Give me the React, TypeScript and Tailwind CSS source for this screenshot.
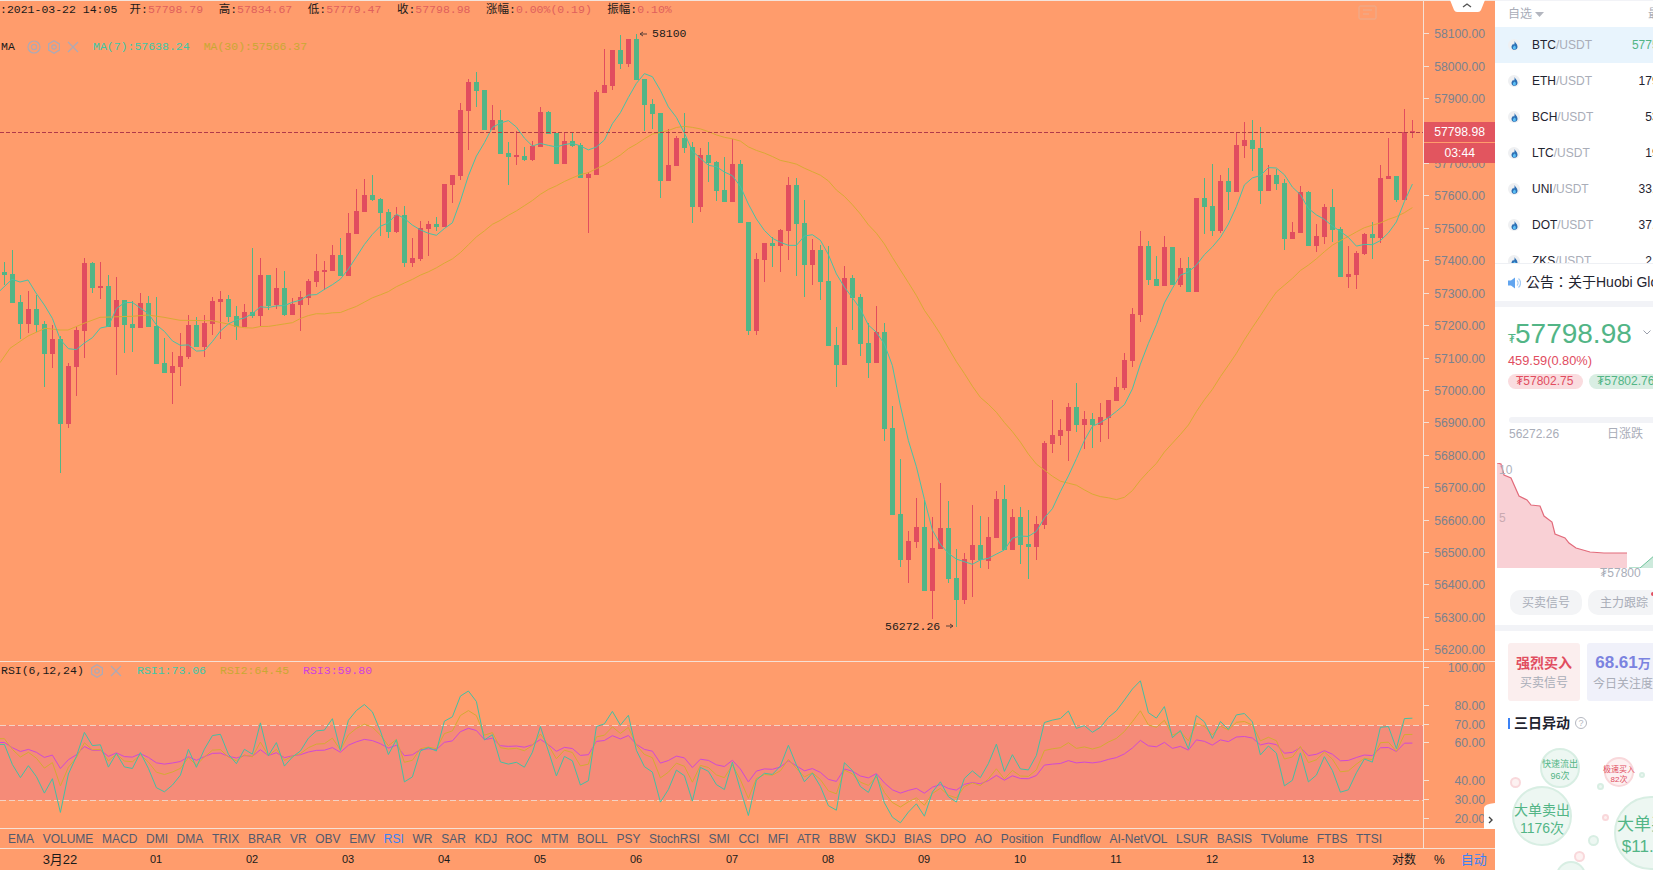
import React from "react";

const SANS = "[font-family:'Liberation_Sans','Noto_Sans_CJK_SC',sans-serif]";
const MONO = "[font-family:'Liberation_Mono','Noto_Sans_CJK_SC',monospace]";

// [red?, high, bodyTop, bodyBottom, low] read off the picture, y = y0 + v / 3
type Row = number[];
const seg = (y0: number, rows: Row[]) =>
  rows.map(([red, h, t, b, l]) => ({
    red: red === 1,
    high: y0 + h / 3,
    top: y0 + t / 3,
    bottom: y0 + b / 3,
    low: y0 + l / 3,
  }));

const candles = [
  ...seg(230, [
    [0, 96, 125, 135, 165], [0, 60, 132, 218, 218], [0, 195, 216, 282, 326], [1, 182, 237, 282, 310],
    [0, 195, 237, 285, 305], [0, 273, 282, 372, 472], [1, 285, 327, 372, 415], [0, 318, 327, 582, 728],
    [1, 400, 408, 582, 594], [1, 292, 300, 411, 498], [1, 84, 99, 303, 385], [0, 96, 99, 174, 189],
    [1, 96, 168, 174, 208], [0, 136, 168, 291, 291], [1, 142, 210, 291, 435], [0, 210, 210, 285, 368],
    [0, 212, 282, 294, 366], [1, 190, 219, 294, 294], [0, 198, 219, 291, 291], [0, 200, 288, 402, 402],
    [0, 324, 399, 429, 429], [1, 366, 408, 429, 522], [1, 309, 378, 411, 468], [1, 255, 285, 382, 387],
    [0, 262, 285, 351, 351], [1, 255, 279, 351, 382], [1, 201, 213, 282, 315], [1, 182, 207, 216, 328],
    [0, 196, 207, 262, 276], [0, 228, 258, 291, 330], [1, 222, 246, 291, 291], [0, 54, 246, 258, 264],
    [1, 84, 135, 258, 288], [0, 135, 135, 228, 240], [1, 114, 174, 226, 238], [0, 122, 174, 255, 258],
    [1, 204, 222, 255, 255], [1, 182, 201, 225, 302], [1, 147, 153, 204, 225], [1, 72, 123, 156, 171],
    [1, 93, 120, 126, 180], [1, 45, 75, 123, 123],
  ]),
  ...seg(30, [
    [0, 625, 675, 738, 738], [1, 550, 610, 738, 738], [1, 477, 543, 612, 612], [1, 448, 495, 546, 546],
    [0, 435, 495, 510, 513], [0, 505, 507, 549, 618], [0, 537, 546, 606, 624], [1, 531, 555, 606, 609],
    [0, 528, 555, 699, 710], [1, 625, 684, 699, 710], [1, 572, 595, 687, 693], [1, 572, 582, 597, 678],
    [0, 561, 582, 591, 603], [1, 462, 462, 591, 591], [1, 435, 435, 465, 519], [1, 219, 240, 438, 450],
    [1, 147, 156, 243, 360], [0, 126, 156, 183, 230], [0, 180, 180, 300, 300], [1, 224, 270, 300, 300],
    [0, 240, 270, 372, 372], [0, 335, 369, 381, 465], [1, 303, 375, 381, 405], [0, 352, 378, 390, 393],
    [1, 333, 348, 390, 393], [1, 231, 246, 351, 351], [0, 243, 246, 312, 312], [0, 309, 309, 402, 402],
    [1, 306, 333, 402, 402], [0, 308, 333, 348, 352], [0, 338, 345, 444, 444], [1, 426, 432, 444, 608],
    [1, 180, 186, 435, 435], [1, 57, 165, 189, 189], [1, 60, 60, 168, 180], [0, 16, 60, 102, 118],
    [1, 27, 27, 102, 110], [0, 12, 27, 150, 150], [0, 147, 147, 225, 303], [0, 208, 222, 252, 297],
    [0, 249, 249, 453, 504], [1, 297, 405, 453, 453], [1, 318, 324, 408, 408], [0, 249, 324, 354, 369],
    [0, 335, 351, 531, 580], [1, 355, 375, 531, 546], [0, 335, 375, 399, 456], [0, 392, 396, 483, 513],
    [0, 381, 480, 516, 516], [1, 326, 402, 516, 516], [0, 390, 402, 579, 579],
  ]),
  ...seg(180, [
    [0, 126, 126, 453, 466], [1, 219, 237, 453, 466], [1, 189, 189, 240, 306], [0, 170, 189, 198, 260],
    [1, 146, 150, 198, 276], [1, -9, 15, 153, 240], [0, -6, 15, 132, 288], [0, 61, 129, 255, 350],
    [1, 177, 210, 255, 315], [0, 195, 210, 306, 360], [0, 198, 303, 498, 498], [0, 441, 495, 555, 622],
    [1, 258, 294, 555, 555], [0, 285, 294, 354, 450], [0, 342, 351, 492, 528], [0, 430, 489, 549, 594],
    [1, 378, 456, 549, 549], [0, 430, 456, 747, 782], [0, 678, 744, 1005, 1005], [0, 837, 1002, 1140, 1162],
    [1, 1052, 1083, 1140, 1210], [1, 954, 1041, 1086, 1104], [0, 960, 1041, 1233, 1233], [1, 1010, 1104, 1233, 1317],
    [1, 909, 1044, 1107, 1107], [0, 964, 1044, 1197, 1208], [0, 1108, 1194, 1260, 1340], [1, 1120, 1137, 1260, 1272],
    [1, 976, 1095, 1140, 1252], [0, 1008, 1095, 1140, 1164], [1, 1010, 1071, 1143, 1166], [1, 934, 957, 1074, 1074],
    [0, 915, 957, 1110, 1110], [1, 988, 1011, 1110, 1110], [0, 982, 1011, 1095, 1152], [0, 990, 1092, 1101, 1196],
    [1, 1008, 1032, 1101, 1140], [1, 783, 789, 1035, 1048], [1, 660, 765, 792, 820], [1, 716, 750, 768, 795],
    [1, 670, 681, 753, 844], [0, 610, 681, 735, 756], [1, 692, 717, 735, 808], [0, 698, 717, 735, 804],
    [1, 668, 711, 735, 786], [1, 660, 660, 714, 776], [1, 590, 621, 663, 663], [1, 519, 540, 624, 630],
    [1, 385, 402, 543, 560],
  ]),
  ...seg(100, [
    [1, 393, 438, 645, 665], [0, 423, 438, 540, 555], [0, 468, 537, 558, 558], [1, 408, 441, 558, 558],
    [0, 441, 441, 555, 555], [1, 475, 504, 555, 562], [0, 470, 504, 576, 576], [1, 294, 294, 576, 576],
    [0, 235, 294, 321, 402], [0, 192, 318, 393, 408], [1, 225, 243, 393, 399], [0, 205, 243, 276, 330],
    [1, 96, 135, 276, 276], [1, 67, 120, 138, 175], [0, 60, 120, 147, 213], [0, 82, 144, 273, 312],
    [1, 195, 225, 273, 273], [0, 207, 225, 252, 270], [0, 237, 249, 417, 450], [1, 366, 396, 417, 417],
    [1, 258, 276, 399, 399], [0, 273, 276, 438, 438], [1, 372, 408, 438, 456], [1, 312, 321, 411, 432],
    [0, 267, 321, 390, 426], [0, 381, 387, 531, 531], [1, 438, 522, 531, 564], [1, 453, 459, 525, 567],
    [1, 399, 402, 462, 465], [0, 366, 402, 414, 477], [1, 195, 234, 414, 430], [1, 114, 228, 237, 237],
    [0, 228, 228, 300, 306], [1, 27, 96, 300, 300], [1, 60, 93, 99, 114],
  ]),
];

const closes = candles.map((c) => (c.red ? c.top : c.bottom));
const xOf = (i: number) => 4.4 + 8 * i;

const movingAverage = (n: number, from: number) =>
  closes.flatMap((_, i) => {
    if (i < from) return [];
    const part = closes.slice(i - n + 1, i + 1);
    return [[xOf(i), part.reduce((a, b) => a + b, 0) / part.length]];
  });

const line = (pts: number[][]) => pts.map(([x, y]) => `${x},${y.toFixed(1)}`).join(" ");

const ma7 = [[0, 290.7], [12, 279.3], [20, 282], [28, 280], [36, 293], [44.4, 305], ...movingAverage(7, 6)];
const ma30 = [
  [0, 362.7], [10, 348.3], [28, 336], [45, 328.3], [60, 330], [68, 330], [84, 323.3], [100, 317.3],
  [132, 316.3], [148, 315], [164, 317.3], [180, 320.3], [212, 320.7], [228, 324],
  ...movingAverage(30, 29),
];

const rsiY = (v: number) => 667 + (100 - v) * 1.887;

function rsiLine(n: number, seed: number) {
  let up = (seed / 100) * 25;
  let down = (1 - seed / 100) * 25;
  const pts = [[0, rsiY(seed)]];
  closes.forEach((y, i) => {
    if (i > 0) {
      const d = closes[i - 1] - y;
      up = (up * (n - 1) + Math.max(d, 0)) / n;
      down = (down * (n - 1) + Math.max(-d, 0)) / n;
    }
    pts.push([xOf(i), rsiY((100 * up) / (up + down))]);
  });
  return pts;
}

const priceLabels = Array.from({ length: 20 }, (_, i) => 58100 - i * 100);
const rsiLabels = [100, 80, 70, 60, 40, 30, 20];
const priceY = (p: number) => 33.3 + ((58100 - p) / 100) * 32.42;

function Chart() {
  return (
    <svg width="1495" height="829" className="block">
      <rect x="0" y="725" width="1423" height="75" fill="#f58b78" />
      <line x1="0" x2="1423" y1="725.5" y2="725.5" stroke="#f3d2c4" strokeDasharray="6 3" />
      <line x1="0" x2="1423" y1="800.5" y2="800.5" stroke="#f3d2c4" strokeDasharray="6 3" />

      {candles.map((c, i) => (
        <g key={i} fill={c.red ? "#e14d5f" : "#52b586"} shapeRendering="crispEdges">
          <rect x={4 + 8 * i} y={Math.round(c.high)} width="1" height={Math.max(1, Math.round(c.low) - Math.round(c.high))} />
          <rect x={2 + 8 * i} y={Math.round(c.top)} width="5" height={Math.max(2, Math.round(c.bottom) - Math.round(c.top))} />
        </g>
      ))}

      <polyline points={line(ma30)} fill="none" stroke="#d9a935" strokeWidth="1" />
      <polyline points={line(ma7)} fill="none" stroke="#45c3a8" strokeWidth="1" />
      <polyline points={line(rsiLine(24, 60))} fill="none" stroke="#cf49d4" strokeWidth="1" />
      <polyline points={line(rsiLine(12, 62))} fill="none" stroke="#d4a933" strokeWidth="1" />
      <polyline points={line(rsiLine(6, 59))} fill="none" stroke="#44bfa3" strokeWidth="1" />

      <line x1="0" x2="1429" y1="132.5" y2="132.5" stroke="#b03a4a" strokeDasharray="4 2" />

      <g shapeRendering="crispEdges" stroke="#f6e0d4">
        <line x1="1423.5" x2="1423.5" y1="0" y2="829" />
        <line x1="0" x2="1495" y1="661.5" y2="661.5" />
        <line x1="0" x2="1495" y1="828.5" y2="828.5" />
        {priceLabels.map((p) => (
          <line key={p} x1="1424" x2="1429" y1={Math.round(priceY(p)) + 0.5} y2={Math.round(priceY(p)) + 0.5} />
        ))}
        {rsiLabels.map((v) => (
          <line key={v} x1="1424" x2="1429" y1={Math.round(rsiY(v)) + 0.5} y2={Math.round(rsiY(v)) + 0.5} />
        ))}
      </g>

      <g fontFamily="Liberation Sans" fontSize="12.2" fill="#7a828f" textAnchor="end">
        {priceLabels
          .filter((p) => p !== 57800)
          .map((p) => (
            <text key={p} x="1485" y={priceY(p) + 5}>{p}.00</text>
          ))}
        {rsiLabels.map((v) => (
          <text key={v} x="1485" y={rsiY(v) + 5}>{v}.00</text>
        ))}
      </g>

      <rect x="1424" y="122" width="71" height="20" fill="#e2555f" />
      <rect x="1424" y="143" width="71" height="20" fill="#e2555f" />
      <g fontFamily="Liberation Sans" fontSize="12.2" fill="#fff" textAnchor="end">
        <text x="1485" y="136">57798.98</text>
        <text x="1475" y="157">03:44</text>
      </g>

      <g fontFamily="Liberation Mono" fontSize="11.5" fill="#1a1a1a">
        <text x="652" y="37">58100</text>
        <text x="885" y="630">56272.26</text>
      </g>
      <g fill="none" stroke="#5a4038">
        <path d="M647 34h-7l3-2m-3 2l3 2" />
        <path d="M946 626h7l-3-2m3 2l-3 2" />
      </g>

      <g fill="none" stroke="#e6b39a" opacity="0.8">
        <rect x="1359" y="6" width="17" height="13" rx="1" />
        <path d="M1363 10h9M1363 14h6" />
      </g>
      <path d="M1450 0h35l-4 10q-1 2-3 2h-21q-2 0-3-2z" fill="#fff" />
      <path d="M1463 7l4-3 4 3" fill="none" stroke="#555" strokeWidth="1.4" />
      <path d="M1495 803v34q-11-1-11-5v-24q0-4 11-5z" fill="#fff" />
      <path d="M1489 817l3 3-3 3" fill="none" stroke="#444" strokeWidth="1.4" />
    </svg>
  );
}

function EyeIcon() {
  return (
    <svg width="14" height="14" viewBox="0 0 14 14" fill="none" stroke="#aaaab8" strokeWidth="1.2">
      <circle cx="7" cy="7" r="6" />
      <circle cx="7" cy="7" r="2.6" />
    </svg>
  );
}

function GearIcon() {
  return (
    <svg width="14" height="14" viewBox="0 0 14 14" fill="none" stroke="#aaaab8" strokeWidth="1.2">
      <path d="M7 .8l5.4 3.1v6.2L7 13.2 1.6 10.1V3.9z" />
      <circle cx="7" cy="7" r="2.2" />
    </svg>
  );
}

function CloseIcon() {
  return (
    <svg width="12" height="12" viewBox="0 0 12 12" fill="none" stroke="#aaaab8" strokeWidth="1.2">
      <path d="M1 1l10 10M11 1L1 11" />
    </svg>
  );
}

const tabs = [
  "EMA", "VOLUME", "MACD", "DMI", "DMA", "TRIX", "BRAR", "VR", "OBV", "EMV", "RSI", "WR", "SAR", "KDJ", "ROC",
  "MTM", "BOLL", "PSY", "StochRSI", "SMI", "CCI", "MFI", "ATR", "BBW", "SKDJ", "BIAS", "DPO", "AO", "Position",
  "Fundflow", "AI-NetVOL", "LSUR", "BASIS", "TVolume", "FTBS", "TTSI",
];

const ticks = ["3月22", "01", "02", "03", "04", "05", "06", "07", "08", "09", "10", "11", "12", "13"];

function ChartPanel() {
  return (
    <div className="flex h-[870px] w-[1495px] shrink-0 flex-col bg-[#ff9c6c]">
      <div className="relative h-[829px] border-t border-[#f4e4dc]">
        <div className="-mt-px">
          <Chart />
        </div>
        <div className={`absolute left-0 top-px flex h-4 items-center gap-[15.5px] text-[11.5px] whitespace-nowrap text-[#1a1a1a] ${MONO}`}>
          <span className="w-[114px]">:2021-03-22 14:05</span>
          {[
            ["开", "57798.79"],
            ["高", "57834.67"],
            ["低", "57779.47"],
            ["收", "57798.98"],
            ["涨幅", "0.00%(0.19)"],
            ["振幅", "0.10%"],
          ].map(([k, v]) => (
            <span key={k}>
              {k}:<span className="text-[#e0605c]">{v}</span>
            </span>
          ))}
        </div>
        <div className={`absolute left-px top-[38px] flex h-4 items-center text-[11.5px] whitespace-nowrap ${MONO}`}>
          <span className="w-[26px] text-[#1a1a1a]">MA</span>
          <span className="w-5"><EyeIcon /></span>
          <span className="w-5"><GearIcon /></span>
          <span className="w-[26px]"><CloseIcon /></span>
          <span className="text-[#3cc8a8]">MA(7):57638.24</span>
          <span className="ml-[14px] text-[#c9a833]">MA(30):57566.37</span>
        </div>
        <div className={`absolute left-px top-[662px] flex h-4 items-center text-[11.5px] whitespace-nowrap ${MONO}`}>
          <span className="w-[89px] text-[#1a1a1a]">RSI(6,12,24)</span>
          <span className="w-5"><GearIcon /></span>
          <span className="w-[27px]"><CloseIcon /></span>
          <span className="text-[#3cc8a8]">RSI1:73.06</span>
          <span className="ml-[14px] text-[#c9a833]">RSI2:64.45</span>
          <span className="ml-[14px] text-[#cf3fe0]">RSI3:59.80</span>
        </div>
      </div>
      <div className={`flex h-5 border-b border-[#f6e0d4] text-[12px] text-[#515a6e] ${SANS}`}>
        <div className="flex w-[1424px] items-center gap-[8.65px] border-r border-[#f6e0d4] pl-2 whitespace-nowrap">
          {tabs.map((t) => (
            <span key={t} className={t === "RSI" ? "text-[#3b82f6]" : ""}>{t}</span>
          ))}
        </div>
      </div>
      <div className={`flex h-[21px] items-center pl-3 text-[11px] text-[#1a1a1a] ${SANS}`}>
        {ticks.map((t, i) => (
          <span key={t} className={`w-24 text-center ${i === 0 ? "text-[13px]" : ""}`}>{t}</span>
        ))}
        <span className="ml-9 text-[12px]">对数</span>
        <span className="ml-[18px] text-[12px]">%</span>
        <span className="ml-4 text-[13px] text-[#3b82f6]">自动</span>
      </div>
    </div>
  );
}

function CoinIcon() {
  return (
    <span className="flex h-3 w-3 shrink-0 items-center justify-center rounded-full bg-[#eff0f2]">
      <svg width="7" height="9" viewBox="0 0 7 9">
        <path d="M3.6 0c.4 1.6 2.9 2.9 2.9 5.6A3 3 0 0 1 .5 6c0-1.5 1-2.2 1.6-3.2.5.4.7.8.8 1.2.5-1 .9-2.6.7-4z" fill="#2d6fb4" />
        <path d="M3.6 4.5c.9.8 1.3 1.4 1.3 2.2a1.5 1.5 0 0 1-3 0c0-.9 1-1.3 1.7-2.2z" fill="#5cc0f5" />
      </svg>
    </span>
  );
}

const coins = [
  ["BTC", "57759.00"],
  ["ETH", "1790.12"],
  ["BCH", "531.20"],
  ["LTC", "198.21"],
  ["UNI", "33.8412"],
  ["DOT", "37.1234"],
  ["ZKS", "2.5312"],
];

type Bubble = { x: number; y: number; r: number; red?: boolean; lines?: string[]; size?: number };

const bubbles: Bubble[] = [
  { x: 65, y: 37, r: 20, lines: ["快速流出", "96次"], size: 9 },
  { x: 124, y: 41, r: 15, red: true, lines: ["极速买入", "82次"], size: 8 },
  { x: 20, y: 51, r: 5.5, red: true },
  { x: 105, y: 55, r: 3.5 },
  { x: 147, y: 44, r: 3 },
  { x: 110, y: 86, r: 3.5, red: true },
  { x: 98, y: 109, r: 5.5 },
  { x: 84, y: 125, r: 5.5, red: true },
  { x: 47, y: 85, r: 30, lines: ["大单卖出", "1176次"], size: 14 },
  { x: 156, y: 102, r: 37, lines: ["大单买入", "$11.5万"], size: 17 },
  { x: 76, y: 145, r: 15 },
];

function BubbleChart() {
  return (
    <div className="relative h-[139px] w-[320px] overflow-hidden">
      {bubbles.map((b, i) => (
        <div
          key={i}
          className={`absolute flex flex-col items-center justify-center rounded-full border-2 leading-[1.3] whitespace-nowrap ${b.lines ? "pt-[6px]" : ""} ${
            b.red ? "border-[#f9d8db] bg-[#fdf1f1] text-[#e14d5f]" : "border-[#d8eee3] bg-[#edf7f2] text-[#52b586]"
          }`}
          style={{ left: b.x - b.r, top: b.y - b.r, width: b.r * 2, height: b.r * 2, fontSize: b.size }}
        >
          {b.lines?.map((l) => <span key={l}>{l}</span>)}
        </div>
      ))}
    </div>
  );
}

function DepthChart() {
  const red =
    "0,30 4,31 7,42 14,45 22,63 30,67 34,72 43,73 47,83 55,89 58,101 68,105 72,110 79,115 93,119 107,120 130,120";
  return (
    <div className="relative h-[105px]">
      <svg width="158" height="105" className="block">
        <polygon points={`${red} 130,135 0,135`} fill="#f9d0d5" transform="translate(0,-30)" />
        <polyline points={red} fill="none" stroke="#e26b7b" strokeWidth="1.2" transform="translate(0,-30)" />
        <polygon points="132,135 143,135 157,123 158,123 158,135" fill="#cdeadc" transform="translate(0,-30)" />
        <polyline points="132,135 143,135 158,122" fill="none" stroke="#6fc49c" transform="translate(0,-30)" />
      </svg>
      <span className="absolute left-0.5 -top-0.5 text-[12px] text-[#aeb1bb]">10</span>
      <span className="absolute left-0.5 top-[46px] text-[12px] text-[#c9a9b0]">5</span>
    </div>
  );
}

function SidePanel() {
  return (
    <div className={`h-[870px] w-[158px] shrink-0 overflow-hidden bg-white ${SANS}`}>
      <div className="w-[320px]">
        <div className="h-px bg-[#f2f3f7]" />
        <div className="flex h-[26px] items-center text-[12px] text-[#a9adb8]">
          <span className="ml-[13px]">自选</span>
          <svg width="9" height="5" viewBox="0 0 9 5" className="ml-[3px]"><path d="M0 0h9L4.5 5z" fill="#b3b6bf" /></svg>
          <span className="ml-[104px]">最新价</span>
        </div>
        <div className="h-[236px] overflow-hidden">
          {coins.map(([name, price], i) => (
            <div key={name} className={`flex h-9 w-[187px] items-center pl-[13px] text-[12px] ${i === 0 ? "bg-[#e8f4fd]" : ""}`}>
              <CoinIcon />
              <span className="ml-3 text-[#1f2430]">{name}</span>
              <span className="text-[#a9adb8]">/USDT</span>
              <span className={`ml-auto ${i === 0 ? "text-[#52b586]" : "text-[#1f2430]"}`}>{price}</span>
            </div>
          ))}
        </div>
        <div className="flex h-[38px] items-center border-t border-[#eef0f4] pl-[13px] text-[14px] whitespace-nowrap text-[#1f2430] [font-family:'Liberation_Sans','Noto_Sans_CJK_TC',sans-serif]">
          <svg width="13" height="12" viewBox="0 0 13 12" className="mr-[5px]">
            <path d="M0 3.5h3L7 .5v11l-4-3H0z" fill="#62a5ef" />
            <path d="M9 3.5a3.4 3.4 0 0 1 0 5M10.5 1.5a6 6 0 0 1 0 9" fill="none" stroke="#a6ccf5" strokeWidth="1.2" />
          </svg>
          公告：关于Huobi Global上线
        </div>
        <div className="h-1.5 bg-[#f2f3f7]" />

        <div className="mt-[11px] flex h-8 items-baseline pl-[13px] leading-8 text-[#52b586]">
          <span className="w-[7px] overflow-visible text-[12px] [font-family:'DejaVu_Sans',sans-serif]">₮</span>
          <span className="text-[28px]">57798.98</span>
          <svg width="8" height="5" viewBox="0 0 8 5" className="ml-[11px] -translate-y-2"><path d="M.5.5L4 4 7.5.5" fill="none" stroke="#9a9fab" /></svg>
        </div>
        <div className="mt-[3px] h-4 pl-[13px] text-[12.8px] leading-4 text-[#e14d5f]">459.59(0.80%)</div>
        <div className="mt-[5px] flex gap-1.5 pl-[13px] text-[12px] leading-[15px]">
          <span className="h-[15px] w-[75px] rounded-full bg-[#fadcdf] pl-2 text-[#e14d5f]">₮57802.75</span>
          <span className="h-[15px] w-[75px] rounded-full bg-[#d9eee3] pl-2 text-[#52b586]">₮57802.76</span>
        </div>
        <div className="mt-7 ml-[14px] h-1.5 w-[144px] rounded-l-full bg-[#f2f3f7]" />
        <div className="mt-[3px] flex h-4 items-center pl-[14px] text-[12px] text-[#a9adb8]">
          <span className="w-[98px]">56272.26</span>
          <span>日涨跌</span>
        </div>
        <div className="mt-[21px] ml-[2px] w-[156px]">
          <DepthChart />
        </div>
        <div className="-mt-[3px] h-4 pl-[105px] text-[12px] leading-4 text-[#a9adb8]">₮57800</div>

        <div className="relative mt-[9px] flex w-[158px] gap-1.5 pl-[15px] text-[12px] text-[#a9adb8]">
          <span className="flex h-[25px] w-[72px] shrink-0 items-center justify-center rounded-[10px] bg-[#f3f4f6]">买卖信号</span>
          <span className="flex h-[25px] w-[72px] shrink-0 items-center justify-center rounded-[10px] bg-[#f3f4f6]">主力跟踪</span>
          <span className="absolute left-[156px] top-0.5 h-1 w-1 rounded-full bg-[#e14d5f]" />
        </div>
        <div className="mt-2.5 h-1.5 bg-[#f2f3f7]" />

        <div className="mt-3 flex gap-[7px] pl-[13px]">
          <div className="flex h-[58px] w-[72px] flex-col items-center justify-center gap-1 rounded-[3px] bg-[#fbeeee] pt-0.5">
            <span className="text-[14px] font-bold leading-4 text-[#e14d5f]">强烈买入</span>
            <span className="text-[12px] leading-4 text-[#a9adb8]">买卖信号</span>
          </div>
          <div className="flex h-[58px] w-[72px] flex-col items-center justify-center gap-1 rounded-[3px] bg-[#f0f1fa] pt-0.5">
            <span className="whitespace-nowrap text-[17px] font-bold leading-4 text-[#7b83e0]">68.61<span className="text-[13px]">万</span></span>
            <span className="whitespace-nowrap text-[12px] leading-4 text-[#a9adb8]">今日关注度</span>
          </div>
        </div>

        <div className="mt-3.5 flex h-4 items-center pl-[13px] text-[14px] font-bold text-[#1f2430]">
          <span className="mr-1 h-[11px] w-0.5 bg-[#3b82f6]" />
          三日异动
          <span className="ml-[5px] flex h-3 w-3 items-center justify-center rounded-full border border-[#b5b8c1] text-[9px] font-normal leading-none text-[#b5b8c1]">?</span>
        </div>
        <BubbleChart />
      </div>
    </div>
  );
}

export default function App() {
  return (
    <div className="flex h-[870px] w-[1653px] overflow-hidden">
      <ChartPanel />
      <SidePanel />
    </div>
  );
}
